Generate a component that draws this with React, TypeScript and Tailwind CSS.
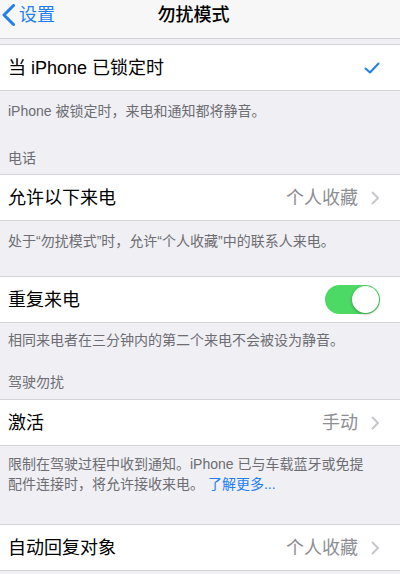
import React from "react";

const FONT = { fontFamily: '"Liberation Sans", "Noto Sans CJK SC", sans-serif' };

function Chevron() {
  return (
    <svg width="9" height="14" viewBox="0 0 9 14" className="ml-[13px] shrink-0">
      <polyline points="1.5,1.5 7,7 1.5,12.5" fill="none" stroke="#c7c7cc" strokeWidth="2" strokeLinecap="round" strokeLinejoin="round" />
    </svg>
  );
}

function Row({ label, children }: { label: string; children?: React.ReactNode }) {
  return (
    <div className="h-[47px] bg-white border-y border-[#d4d4d8] flex items-center pl-2 pr-5">
      <span className="text-[18px] text-black leading-none flex-1">{label}</span>
      {children}
    </div>
  );
}

function Value({ text }: { text: string }) {
  return (
    <div className="flex items-center">
      <span className="text-[18px] text-[#8e8e93] leading-none">{text}</span>
      <Chevron />
    </div>
  );
}

export default function App() {
  return (
    <div className="w-[400px] h-[574px] overflow-hidden bg-[#efeff4]" style={FONT}>
      {/* Nav bar */}
      <div className="h-[39px] bg-[#f7f7f7] border-b border-[#d4d4d8] relative flex items-center pb-[8px] pr-[13px]">
        <div className="flex items-center pl-[2px] text-[#1f7ff0]">
          <svg width="13" height="22" viewBox="0 0 13 22">
            <polyline points="11.5,1.5 2,11 11.5,20.5" fill="none" stroke="#1f7ff0" strokeWidth="3" strokeLinecap="round" strokeLinejoin="round" />
          </svg>
          <span className="text-[18px] leading-none ml-[4px]">设置</span>
        </div>
        <div className="flex-1 flex justify-center -ml-[55px]">
          <span className="text-[18px] font-medium leading-none text-black">勿扰模式</span>
        </div>
      </div>

      <div className="h-[5px]" />

      <Row label="当 iPhone 已锁定时">
        <svg width="16" height="12" viewBox="0 0 16 12">
          <polyline points="1.5,6.5 6,10.5 14.5,1.5" fill="none" stroke="#1f7ff0" strokeWidth="2" strokeLinecap="round" strokeLinejoin="round" />
        </svg>
      </Row>

      <div className="h-[83px] flex flex-col px-2 text-[14px] text-[#6d6d72] leading-[20px]">
        <p className="pt-[10px]">iPhone 被锁定时，来电和通知都将静音。</p>
        <p className="mt-[27px]">电话</p>
      </div>

      <Row label="允许以下来电">
        <Value text="个人收藏" />
      </Row>

      <div className="h-[55px] flex flex-col px-2 text-[14px] text-[#6d6d72] leading-[20px]">
        <p className="pt-[10px]">处于“勿扰模式”时，允许“个人收藏”中的联系人来电。</p>
      </div>

      <Row label="重复来电">
        <div className="w-[55px] h-[29px] rounded-full bg-[#4cd964] flex items-center justify-end pr-[1px]">
          <div className="w-[27px] h-[27px] rounded-full bg-white shadow-[0_1px_3px_rgba(0,0,0,0.35)]" />
        </div>
      </Row>

      <div className="h-[76px] flex flex-col px-2 text-[14px] text-[#6d6d72] leading-[20px]">
        <p className="pt-[7px]">相同来电者在三分钟内的第二个来电不会被设为静音。</p>
        <p className="mt-[22px]">驾驶勿扰</p>
      </div>

      <Row label="激活">
        <Value text="手动" />
      </Row>

      <div className="h-[78px] flex flex-col px-2 text-[14px] text-[#6d6d72] leading-[20px]">
        <p className="pt-[8px]">
          限制在驾驶过程中收到通知。iPhone 已与车载蓝牙或免提
          <br />
          配件连接时，将允许接收来电。 <span className="text-[#1f7ff0]">了解更多...</span>
        </p>
      </div>

      <Row label="自动回复对象">
        <Value text="个人收藏" />
      </Row>
    </div>
  );
}
